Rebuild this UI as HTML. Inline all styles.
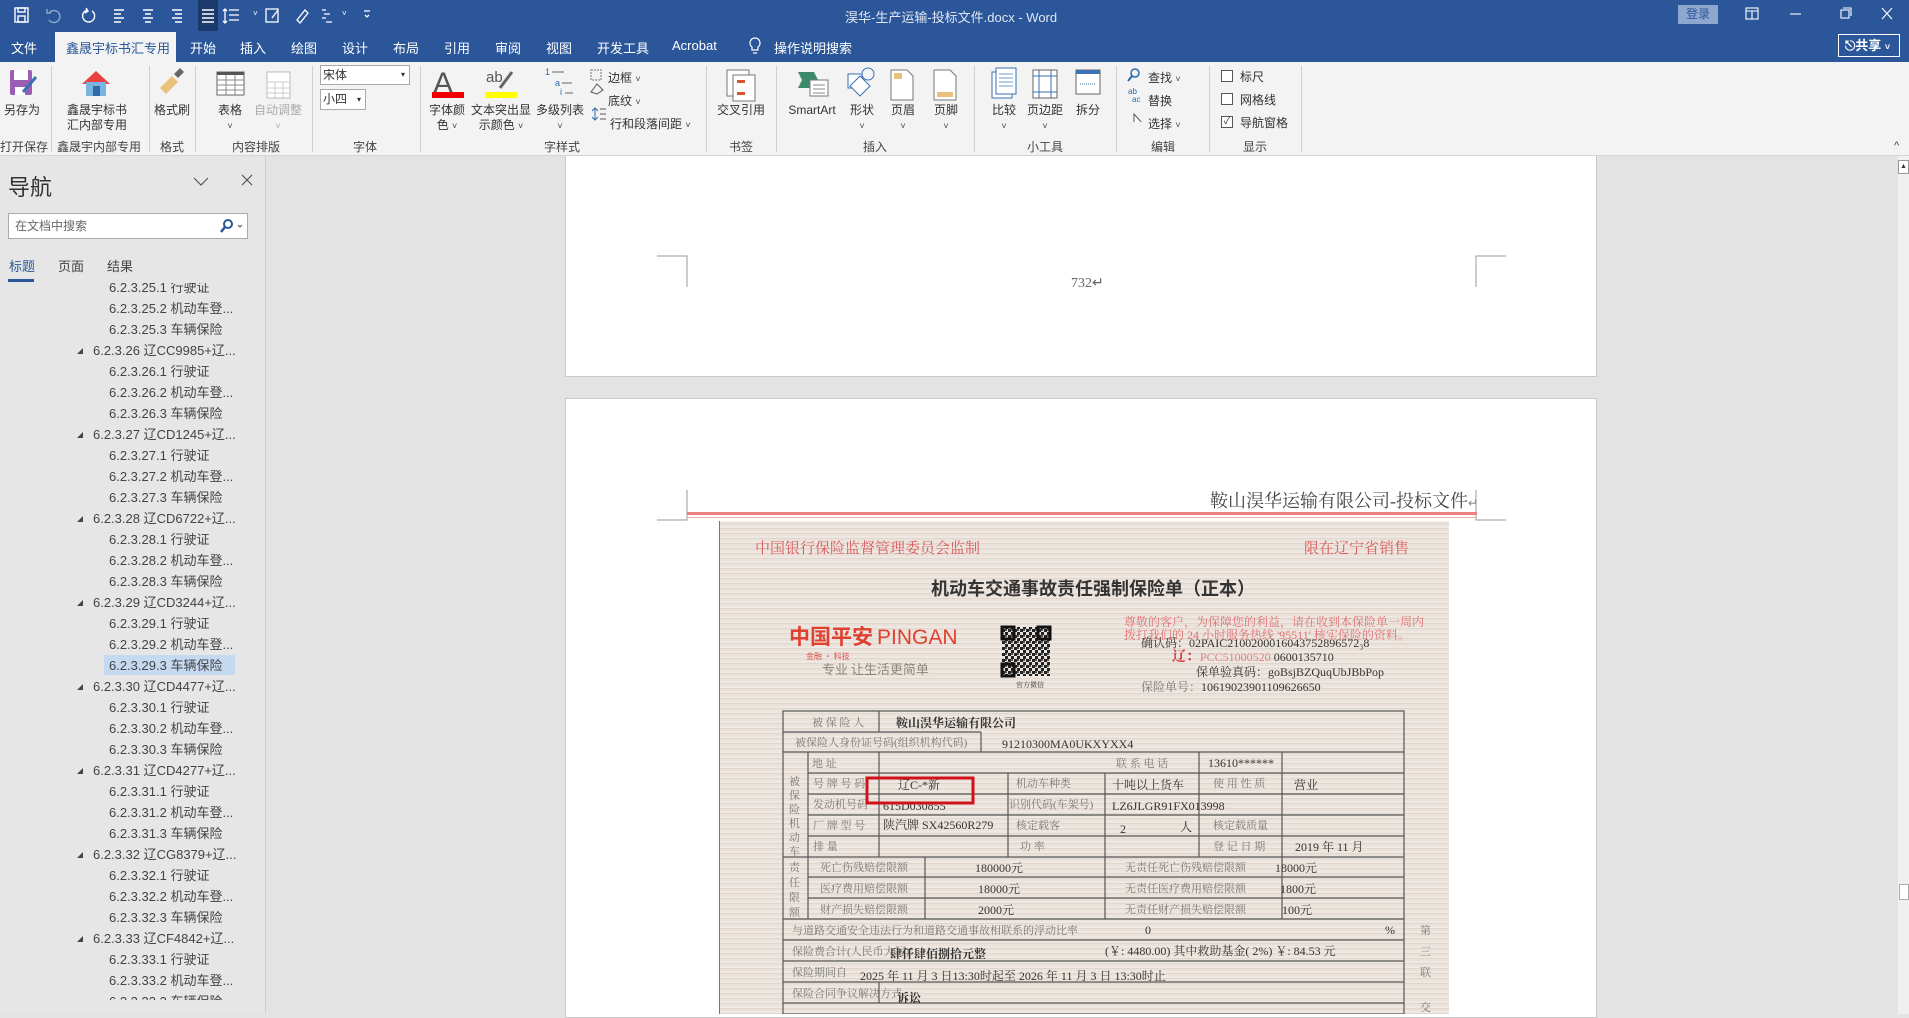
<!DOCTYPE html>
<html><head><meta charset="utf-8">
<style>
*{margin:0;padding:0;box-sizing:border-box}
body{width:1909px;height:1014px;overflow:hidden;position:relative;background:#e3e3e3;font-family:"Liberation Sans","Noto Sans CJK SC",sans-serif;color:#333}
.a{position:absolute;white-space:nowrap}
#title{left:0;top:0;width:1909px;height:62px;background:#2b579a}
.tab{top:38px;font-size:13px;color:#fff}
#ribbon{left:0;top:62px;width:1909px;height:94px;background:#f3f3f3;border-bottom:1px solid #d4d4d4}
.lbl{font-size:12px;color:#333;transform:translateX(-50%);text-align:center;line-height:15px}
.glab{top:138px;font-size:12px;color:#444;transform:translateX(-50%)}
.sep{top:66px;width:1px;height:86px;background:#d0d0d0}
.chev{font-size:9px;color:#444}
#nav{left:0;top:156px;width:266px;height:858px;background:#e6e6e6;border-right:1px solid #cfcfcf}
.it{position:absolute;font-size:13px;color:#444;height:21px;line-height:21px}
.tri{position:absolute;width:0;height:0;border-left:6px solid transparent;border-bottom:6px solid #444}
.cb{width:12px;height:12px;border:1px solid #555;background:#fff}
</style></head><body>

<div class="a" id="title"></div>
<svg class="a" style="left:0;top:0" width="380" height="31">
<g fill="none" stroke="#fff" stroke-width="1.4">
<rect x="15" y="8" width="13" height="14"/><rect x="18" y="8" width="7" height="4"/><rect x="18" y="16" width="7" height="6"/>
<path d="M50 12a6 6 0 1 1 -1 8" stroke="#8fa8cf"/><path d="M47 9v4h4" stroke="#8fa8cf"/>
<path d="M92 11a6 6 0 1 1 -4 -1"/><path d="M86 8l2 3 -3 2"/>
<path d="M114 10h10M114 14h7M114 18h10M114 22h7"/>
<path d="M143 10h10M145 14h6M143 18h10M145 22h6"/>
<path d="M172 10h10M175 14h7M172 18h10M175 22h7"/>
</g>
<rect x="198" y="0" width="20" height="31" fill="#1b3a6b"/>
<path d="M202 10h12M202 14h12M202 18h12M202 22h12" stroke="#fff" stroke-width="1.4"/>
<g fill="none" stroke="#fff" stroke-width="1.3">
<path d="M229 10h10M229 15h10M229 20h10M225 9v14M223 11l2-2 2 2M223 21l2 2 2-2"/>
<rect x="266" y="9" width="12" height="13"/><path d="M272 18l6-8"/>
<path d="M297 20l8-10 3 3-8 10z"/>
<path d="M322 10h4M324 14h6M322 18h4M326 22h6"/>
<path d="M364 11h6M365 15l2 2 2-2"/>
</g>
<g fill="#fff" font-size="8"><text x="253" y="16">˅</text><text x="342" y="16">˅</text></g>
</svg>
<div class="a" style="left:845px;top:7px;font-size:13px;color:#dfe6f1">淏华-生产运输-投标文件.docx  -  Word</div>
<div class="a" style="left:1678px;top:5px;width:40px;height:19px;background:#8ea7cf;color:#2b579a;font-size:12px;text-align:center;line-height:19px">登录</div>
<svg class="a" style="left:1740px;top:4px" width="169" height="24"><g fill="none" stroke="#fff" stroke-width="1.1"><rect x="6" y="4" width="12" height="11"/><path d="M6 7h12M12 7v8"/><path d="M50 10h11"/><rect x="101" y="6" width="8" height="8"/><path d="M103 4h8v8"/><path d="M142 4l10 11M152 4l-10 11"/></g></svg>

<div class="a tab" style="left:11px">文件</div>
<div class="a" style="left:55px;top:32px;width:121px;height:30px;background:#f3f3f3"></div>
<div class="a tab" style="left:66px;color:#2b579a">鑫晟宇标书汇专用</div>
<div class="a tab" style="left:190px">开始</div>
<div class="a tab" style="left:240px">插入</div>
<div class="a tab" style="left:291px">绘图</div>
<div class="a tab" style="left:342px">设计</div>
<div class="a tab" style="left:393px">布局</div>
<div class="a tab" style="left:444px">引用</div>
<div class="a tab" style="left:495px">审阅</div>
<div class="a tab" style="left:546px">视图</div>
<div class="a tab" style="left:597px">开发工具</div>
<div class="a tab" style="left:672px">Acrobat</div>
<svg class="a" style="left:748px;top:36px" width="14" height="20"><g fill="none" stroke="#fff" stroke-width="1.2"><path d="M7 2a5 5 0 0 0-3 9v3h6v-3a5 5 0 0 0-3-9z"/><path d="M5 17h4"/></g></svg>
<div class="a tab" style="left:774px">操作说明搜索</div>
<div class="a" style="left:1838px;top:34px;width:62px;height:23px;border:1px solid #fff;color:#fff;font-size:13px;font-weight:bold;line-height:21px;padding-left:6px">⎋共享 <span style="font-size:9px">˅</span></div>

<div class="a" id="ribbon"></div>
<svg class="a" style="left:0;top:62px" width="1320" height="60">
<rect x="10" y="8" width="22" height="25" rx="2" fill="#9a5fb5"/><rect x="14" y="8" width="14" height="10" fill="#fff"/><rect x="15" y="25" width="10" height="8" fill="#fff"/><path d="M23 30l13-15" stroke="#3b6fb6" stroke-width="3"/>
<path d="M82 22l14-13 14 13" fill="#e84040"/><rect x="86" y="20" width="20" height="14" fill="#7ab3e0"/><rect x="93" y="24" width="7" height="10" fill="#2d6aa8"/>
<path d="M160 26l12-12 6 6-12 12z" fill="#e8c27a"/><path d="M174 12l6-6 4 4-6 6z" fill="#666"/>
<rect x="217" y="10" width="27" height="23" fill="#fff" stroke="#666"/><rect x="217" y="10" width="27" height="3" fill="#555"/><path d="M217 18h27M217 23h27M217 28h27M226 13v20M235 13v20" stroke="#888"/>
<rect x="267" y="10" width="23" height="26" fill="#fff" stroke="#bbb"/><path d="M267 20h23M267 26h23M267 31h23M275 20v16M283 20v16" stroke="#ccc"/>
<text x="433" y="31" font-size="30" fill="#555" font-family="Liberation Sans">A</text><rect x="432" y="30" width="32" height="6" fill="#e00"/>
<text x="486" y="20" font-size="15" fill="#555">ab</text><path d="M500 26l12-16" stroke="#666" stroke-width="3"/><rect x="485" y="30" width="32" height="6" fill="#ff0"/>
<g font-size="9" fill="#2b6cb0"><text x="545" y="13">1</text><text x="555" y="24">a</text><text x="560" y="33">i</text></g><path d="M552 10h12M562 21h10M565 31h8" stroke="#666"/>
<path d="M591 8h10v10h-10z" fill="none" stroke="#777" stroke-dasharray="2 1"/>
<path d="M591 30l6-8 6 6-6 4z" fill="none" stroke="#555"/>
<path d="M595 46v12M592 49l3-3 3 3M592 55l3 3 3-3" stroke="#2b6cb0" fill="none"/><path d="M600 47h6M600 52h6M600 57h6" stroke="#555"/>
<rect x="727" y="8" width="22" height="26" fill="#fff" stroke="#777"/><rect x="733" y="13" width="22" height="26" fill="#fff" stroke="#777"/><rect x="737" y="18" width="8" height="3" fill="#d9532c"/><rect x="737" y="30" width="8" height="3" fill="#d9532c"/>
<path d="M798 10h16l4 8-4 8h-16l4-8z" fill="#3b8a6a"/><rect x="810" y="18" width="18" height="16" fill="#fff" stroke="#777"/><path d="M813 23h12M813 27h12M813 31h12" stroke="#888"/>
<path d="M848 12h14v14h-14z" fill="#fff" stroke="#3b6fb6"/><path d="M860 14l10 10-10 10-10-10z" fill="#fff" stroke="#3b6fb6"/><circle cx="868" cy="12" r="6" fill="none" stroke="#3b6fb6"/>
<path d="M891 8h16l6 6v24h-22z" fill="#fff" stroke="#777"/><rect x="894" y="11" width="8" height="6" fill="#e8c27a"/>
<path d="M934 8h16l6 6v24h-22z" fill="#fff" stroke="#777"/><rect x="937" y="30" width="16" height="5" fill="#e8c27a"/>
<rect x="992" y="10" width="20" height="26" fill="#fff" stroke="#3b6fb6"/><rect x="996" y="6" width="20" height="26" fill="#fff" stroke="#3b6fb6"/><path d="M999 12h14M999 16h14M999 20h14M999 24h14" stroke="#6a9bd1"/>
<rect x="1033" y="8" width="24" height="28" fill="#fff" stroke="#666"/><path d="M1039 8v28M1051 8v28M1033 14h24M1033 30h24" stroke="#3b6fb6"/>
<rect x="1076" y="8" width="24" height="24" fill="#fff" stroke="#666"/><rect x="1076" y="8" width="24" height="4" fill="#3b6fb6"/><path d="M1080 22h16" stroke="#3b6fb6" stroke-dasharray="1 1"/>
<circle cx="1135" cy="11" r="4" fill="none" stroke="#2b6cb0" stroke-width="1.5"/><path d="M1132 14l-4 5" stroke="#2b6cb0" stroke-width="2"/>
<text x="1128" y="32" font-size="8" fill="#2b6cb0">ab</text><text x="1132" y="40" font-size="8" fill="#2b6cb0">ac</text>
<path d="M1134 52v14l3-3 3 5 2-1-3-5h4z" fill="#fff" stroke="#555"/>
</svg>
<div class="a" style="left:320px;top:65px;width:90px;height:20px;background:#fff;border:1px solid #aaa;font-size:12px;line-height:18px;padding-left:2px">宋体<span style="position:absolute;right:4px;font-size:8px">▾</span></div>
<div class="a" style="left:320px;top:89px;width:46px;height:21px;background:#fff;border:1px solid #aaa;font-size:12px;line-height:19px;padding-left:2px">小四<span style="position:absolute;right:4px;font-size:8px">▾</span></div>

<div class="a lbl" style="left:22px;top:103px">另存为</div>
<div class="a lbl" style="left:97px;top:103px">鑫晟宇标书<br>汇内部专用</div>
<div class="a lbl" style="left:172px;top:103px">格式刷</div>
<div class="a lbl" style="left:230px;top:103px">表格<br><span class="chev">˅</span></div>
<div class="a lbl" style="left:278px;top:103px;color:#aaa">自动调整<br><span class="chev" style="color:#aaa">˅</span></div>
<div class="a lbl" style="left:447px;top:103px">字体颜<br>色 <span class="chev">˅</span></div>
<div class="a lbl" style="left:501px;top:103px">文本突出显<br>示颜色 <span class="chev">˅</span></div>
<div class="a lbl" style="left:560px;top:103px">多级列表<br><span class="chev">˅</span></div>
<div class="a" style="left:608px;top:69px;font-size:12px">边框 <span class="chev">˅</span></div>
<div class="a" style="left:608px;top:92px;font-size:12px">底纹 <span class="chev">˅</span></div>
<div class="a" style="left:610px;top:115px;font-size:12px">行和段落间距 <span class="chev">˅</span></div>
<div class="a lbl" style="left:741px;top:103px">交叉引用</div>
<div class="a lbl" style="left:812px;top:103px">SmartArt</div>
<div class="a lbl" style="left:862px;top:103px">形状<br><span class="chev">˅</span></div>
<div class="a lbl" style="left:903px;top:103px">页眉<br><span class="chev">˅</span></div>
<div class="a lbl" style="left:946px;top:103px">页脚<br><span class="chev">˅</span></div>
<div class="a lbl" style="left:1004px;top:103px">比较<br><span class="chev">˅</span></div>
<div class="a lbl" style="left:1045px;top:103px">页边距<br><span class="chev">˅</span></div>
<div class="a lbl" style="left:1088px;top:103px">拆分</div>
<div class="a" style="left:1148px;top:69px;font-size:12px">查找 <span class="chev">˅</span></div>
<div class="a" style="left:1148px;top:92px;font-size:12px">替换</div>
<div class="a" style="left:1148px;top:115px;font-size:12px">选择 <span class="chev">˅</span></div>
<div class="a cb" style="left:1221px;top:70px"></div><div class="a" style="left:1240px;top:68px;font-size:12px">标尺</div>
<div class="a cb" style="left:1221px;top:93px"></div><div class="a" style="left:1240px;top:91px;font-size:12px">网格线</div>
<div class="a cb" style="left:1221px;top:116px;font-size:10px;line-height:10px;text-align:center">✓</div><div class="a" style="left:1240px;top:114px;font-size:12px">导航窗格</div>

<div class="a glab" style="left:24px">打开保存</div>
<div class="a glab" style="left:99px">鑫晟宇内部专用</div>
<div class="a glab" style="left:172px">格式</div>
<div class="a glab" style="left:256px">内容排版</div>
<div class="a glab" style="left:365px">字体</div>
<div class="a glab" style="left:562px">字样式</div>
<div class="a glab" style="left:741px">书签</div>
<div class="a glab" style="left:875px">插入</div>
<div class="a glab" style="left:1045px">小工具</div>
<div class="a glab" style="left:1163px">编辑</div>
<div class="a glab" style="left:1255px">显示</div>
<div class="a sep" style="left:51px"></div><div class="a sep" style="left:149px"></div><div class="a sep" style="left:195px"></div><div class="a sep" style="left:312px"></div><div class="a sep" style="left:420px"></div><div class="a sep" style="left:706px"></div><div class="a sep" style="left:776px"></div><div class="a sep" style="left:974px"></div><div class="a sep" style="left:1116px"></div><div class="a sep" style="left:1209px"></div><div class="a sep" style="left:1301px"></div>
<div class="a" style="left:1894px;top:140px;font-size:11px;color:#444">^</div>

<div class="a" id="nav"></div>
<div class="a" style="left:8px;top:170px;font-size:22px;color:#333">导航</div>
<svg class="a" style="left:192px;top:172px" width="70" height="20"><path d="M2 6l7 7 7-7M50 3l10 10M60 3l-10 10" fill="none" stroke="#555" stroke-width="1.2"/></svg>
<div class="a" style="left:8px;top:213px;width:240px;height:26px;background:#fff;border:1px solid #aaa;font-size:12px;color:#666;line-height:24px;padding-left:6px">在文档中搜索</div>
<svg class="a" style="left:218px;top:217px" width="28" height="18"><circle cx="10" cy="7" r="4" fill="none" stroke="#2b579a" stroke-width="2"/><path d="M7 10l-4 5" stroke="#2b579a" stroke-width="2.5"/><path d="M20 8l2 2 2-2" fill="none" stroke="#555"/></svg>
<div class="a" style="left:9px;top:256px;font-size:13px;color:#2b579a">标题</div>
<div class="a" style="left:58px;top:256px;font-size:13px;color:#444">页面</div>
<div class="a" style="left:107px;top:256px;font-size:13px;color:#444">结果</div>
<div class="a" style="left:8px;top:279px;width:26px;height:3px;background:#2b579a"></div>
<div class="a" style="left:0;top:283px;width:266px;height:717px;overflow:hidden">
<div style="position:absolute;left:104px;top:372px;width:131px;height:20px;background:#c5d9f1"></div>
<div id="list" style="position:absolute;left:0;top:-6px;width:266px"></div>
</div>
<script>
(function(){var L=document.getElementById('list'),h='',y=0;
function a(t,l){if(l==3){h+='<div class="tri" style="left:77px;top:'+(y+8)+'px"></div><div class="it" style="left:93px;top:'+y+'px">'+t+'</div>';}else h+='<div class="it" style="left:109px;top:'+y+'px">'+t+'</div>';y+=21;}
a('6.2.3.25.1 行驶证',4);a('6.2.3.25.2 机动车登...',4);a('6.2.3.25.3 车辆保险',4);
var n=[['26','CC9985'],['27','CD1245'],['28','CD6722'],['29','CD3244'],['30','CD4477'],['31','CD4277'],['32','CG8379'],['33','CF4842']];
n.forEach(function(k){a('6.2.3.'+k[0]+' 辽'+k[1]+'+辽...',3);a('6.2.3.'+k[0]+'.1 行驶证',4);a('6.2.3.'+k[0]+'.2 机动车登...',4);a('6.2.3.'+k[0]+'.3 车辆保险',4);});
L.innerHTML=h;})();
</script>

<div class="a" style="left:1898px;top:156px;width:11px;height:858px;background:#f0f0f0"></div>
<div class="a" style="left:1898px;top:160px;width:11px;height:14px;border:1px solid #999;background:#fff;font-size:7px;line-height:12px;text-align:center">▲</div>
<div class="a" style="left:1899px;top:884px;width:10px;height:16px;border:1px solid #aaa;background:#fff"></div>

<div class="a" style="left:565px;top:156px;width:1032px;height:221px;background:#fff;border:1px solid #c8c8c8;border-top:none"></div>
<svg class="a" style="left:650px;top:250px" width="870" height="45"><path d="M7 6h30v31M856 6h-30v31" fill="none" stroke="#999"/></svg>
<div class="a" style="left:1071px;top:275px;font-size:14px;color:#666;font-family:'Liberation Serif',serif">732↵</div>

<div class="a" style="left:565px;top:398px;width:1032px;height:620px;background:#fff;border:1px solid #c8c8c8"></div>
<svg class="a" style="left:650px;top:485px" width="870" height="40"><path d="M37 5v30h-30M826 5v30h30" fill="none" stroke="#999"/><rect x="37" y="27" width="790" height="3" fill="#f08080"/><rect x="37" y="32" width="790" height="1" fill="#f4b0b0"/></svg>
<div class="a" style="left:1210px;top:487px;font-size:18px;color:#444;font-family:'Liberation Serif','Noto Serif CJK SC',serif">鞍山淏华运输有限公司-投标文件<span style="font-size:12px;color:#888">↵</span></div>

<div class="a" style="left:719px;top:521px;width:730px;height:493px;background:repeating-linear-gradient(180deg,#efe8e2 0 2px,#e0d7cf 2px 3px,#eae2da 3px 5px);border-left:1px solid #777;overflow:hidden">
<svg width="730" height="493" style="font-family:'Liberation Serif','Noto Serif CJK SC',serif">
<g fill="#d95a5a" font-size="15"><text x="35" y="32">中国银行保险监督管理委员会监制</text><text x="584" y="32">限在辽宁省销售</text></g>
<text x="373" y="74" font-size="18" font-weight="bold" fill="#333" text-anchor="middle" font-family="'Noto Sans CJK SC',sans-serif">机动车交通事故责任强制保险单（正本）</text>
<text x="69" y="123" font-size="21" font-weight="bold" fill="#e0402f" font-family="'Noto Sans CJK SC',sans-serif">中国平安</text>
<text x="157" y="123" font-size="21" fill="#e0402f" font-family="'Liberation Sans',sans-serif">PINGAN</text>
<text x="86" y="138" font-size="8" fill="#e05050" font-family="'Noto Sans CJK SC',sans-serif">金融 · 科技</text>
<text x="102" y="153" font-size="13" fill="#8a8a7a" font-family="'Noto Sans CJK SC',sans-serif">专业  让生活更简单</text>
<defs><pattern id="qr" width="6" height="6" patternUnits="userSpaceOnUse"><rect width="3" height="3" fill="#222"/><rect x="3" y="3" width="3" height="3" fill="#222"/><rect x="3" y="0" width="2" height="2" fill="#555"/></pattern></defs>
<rect x="282" y="106" width="48" height="49" fill="url(#qr)"/>
<rect x="282" y="106" width="12" height="12" fill="none" stroke="#111" stroke-width="3"/><rect x="318" y="106" width="12" height="12" fill="none" stroke="#111" stroke-width="3"/><rect x="282" y="143" width="12" height="12" fill="none" stroke="#111" stroke-width="3"/>
<text x="296" y="166" font-size="7" fill="#333">官方微信</text>
<g fill="#e07070" font-size="12"><text x="404" y="105">尊敬的客户，为保障您的利益，请在收到本保险单一周内</text><text x="404" y="118">拨打我们的 24 小时服务热线 '95511' 核实保险的资料。</text></g>
<g fill="#333" font-size="12"><text x="421" y="126">确认码：02PAIC2100200016043752896572₃8</text>
<text x="452" y="140"><tspan fill="#d94040" font-weight="bold" font-size="14">辽：</tspan><tspan fill="#e08080">PCC51000520</tspan> 0600135710</text>
<text x="476" y="155">保单验真码：goBsjBZQuqUbJBbPop</text>
<text x="421" y="170"><tspan fill="#777">保险单号：</tspan>10619023901109626650</text></g>
<g stroke="#555" stroke-width="1.2" fill="none">
<rect x="63" y="190" width="621" height="303"/>
<path d="M63 231h621M88 252h596M88 273h596M88 294h596M63 336h621M88 356h596M88 377h596M63 398h621M63 419h621M63 440h621M63 461h621M63 482h621M88 315h596"/>
<path d="M159 190v21M90 211h171M261 211v20M88 231v167M159 231v105M205 336v62M288 252v84M385 252v146M479 231v105M562 231v105M562 336v62M63 211h27"/>
<path d="M159 461v21"/>
</g>
<g fill="#777" font-size="11">
<text x="92" y="205">被 保 险 人</text><text x="75" y="225">被保险人身份证号码(组织机构代码)</text>
<text x="92" y="246">地      址</text><text x="396" y="246">联 系 电 话</text>
<text x="69" y="264">被</text><text x="69" y="278">保</text><text x="69" y="292">险</text><text x="69" y="306">机</text><text x="69" y="320">动</text><text x="69" y="334">车</text>
<text x="93" y="266">号 牌 号 码</text><text x="296" y="266">机动车种类</text><text x="493" y="266">使 用 性 质</text>
<text x="93" y="287">发动机号码</text><text x="289" y="287">识别代码(车架号)</text>
<text x="93" y="308">厂 牌 型 号</text><text x="296" y="308">核定载客</text><text x="493" y="308">核定载质量</text>
<text x="93" y="329">排      量</text><text x="300" y="329">功      率</text><text x="493" y="329">登 记 日 期</text>
<text x="69" y="350">责</text><text x="69" y="365">任</text><text x="69" y="380">限</text><text x="69" y="395">额</text>
<text x="100" y="350">死亡伤残赔偿限额</text><text x="100" y="371">医疗费用赔偿限额</text><text x="100" y="392">财产损失赔偿限额</text>
<text x="405" y="350">无责任死亡伤残赔偿限额</text><text x="405" y="371">无责任医疗费用赔偿限额</text><text x="405" y="392">无责任财产损失赔偿限额</text>
<text x="72" y="413">与道路交通安全违法行为和道路交通事故相联系的浮动比率</text>
<text x="72" y="434">保险费合计(人民币大写)：</text><text x="72" y="455">保险期间自</text><text x="72" y="476">保险合同争议解决方式</text>
<text x="700" y="413">第</text><text x="700" y="434">三</text><text x="700" y="455">联</text><text x="700" y="490">交</text>
</g>
<g fill="#333" font-size="12">
<text x="176" y="206" font-weight="bold">鞍山淏华运输有限公司</text><text x="282" y="227">91210300MA0UKXYXX4</text>
<text x="488" y="246">13610******</text>
<text x="178" y="268">辽C-*新</text><text x="392" y="268">十吨以上货车</text><text x="574" y="268">营业</text>
<text x="163" y="289">615D030855</text><text x="392" y="289">LZ6JLGR91FX013998</text>
<text x="163" y="308">陕汽牌 SX42560R279</text><text x="400" y="312">2</text><text x="460" y="310">人</text>
<text x="575" y="330">2019 年 11 月</text>
<text x="255" y="351">180000元</text><text x="555" y="351">18000元</text>
<text x="258" y="372">18000元</text><text x="560" y="372">1800元</text>
<text x="258" y="393">2000元</text><text x="562" y="393">100元</text>
<text x="425" y="413">0</text><text x="665" y="413">%</text>
<text x="170" y="437" font-weight="bold">肆仟肆佰捌拾元整</text><text x="385" y="434">(￥:  4480.00)  其中救助基金( 2%) ￥:   84.53   元</text>
<text x="140" y="459">2025     年     11     月     3     日13:30时起至   2026    年    11    月    3    日 13:30时止</text>
<text x="177" y="481" font-weight="bold">诉讼</text>
</g>
<rect x="147" y="257" width="106" height="25" fill="none" stroke="#d0101a" stroke-width="3"/>
</svg>
</div>
</body></html>
